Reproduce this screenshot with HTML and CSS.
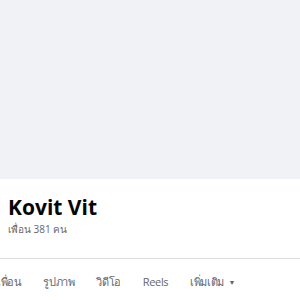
FILE: index.html
```html
<!DOCTYPE html>
<html>

<head>
  <meta charset="utf-8">
  <meta name="viewport" content="width=device-width">
  <title>Kovit Vit</title>
  <link rel="stylesheet" href="styles.css">
</head>

<body>
  <div class="cover"></div>

  <div class="profile">
    <h1 class="name">Kovit Vit</h1>
    <div class="friends">เพื่อน 381 คน</div>
  </div>

  <div class="tabs">
    <div class="tab">เพื่อน</div>
    <div class="tab">รูปภาพ</div>
    <div class="tab">วิดีโอ</div>
    <div class="tab">Reels</div>
    <div class="tab">เพิ่มเติม <span class="caret">&#9660;</span></div>
  </div>
</body>

</html>
```

FILE: styles.css
```css
body {
  font-family: "Open Sans", "Noto Sans", sans-serif;
  background-color: #ffffff;
  margin: 0;
  padding: 0;
  overflow: hidden;
}

.cover {
  height: 179px;
  background-color: #f0f2f5;
}

.profile {
  padding: 0 8px;
  height: 79px;
  border-bottom: 1px solid #dadde1;
}

.name {
  margin: 0;
  padding-top: 15px;
  font-size: 21px;
  line-height: 26px;
  font-weight: 700;
  color: #050505;
}

.friends {
  margin-top: 2px;
  font-size: 10px;
  line-height: 14px;
  color: #65676b;
}

.tabs {
  display: flex;
  gap: 21.5px;
  margin-left: -3px;
  padding-top: 16px;
}

.tab {
  font-size: 11px;
  line-height: 14px;
  color: #65676b;
  white-space: nowrap;
  letter-spacing: -0.3px;
}

.caret {
  font-size: 7px;
  vertical-align: 1px;
  margin-left: 2px;
}
```
